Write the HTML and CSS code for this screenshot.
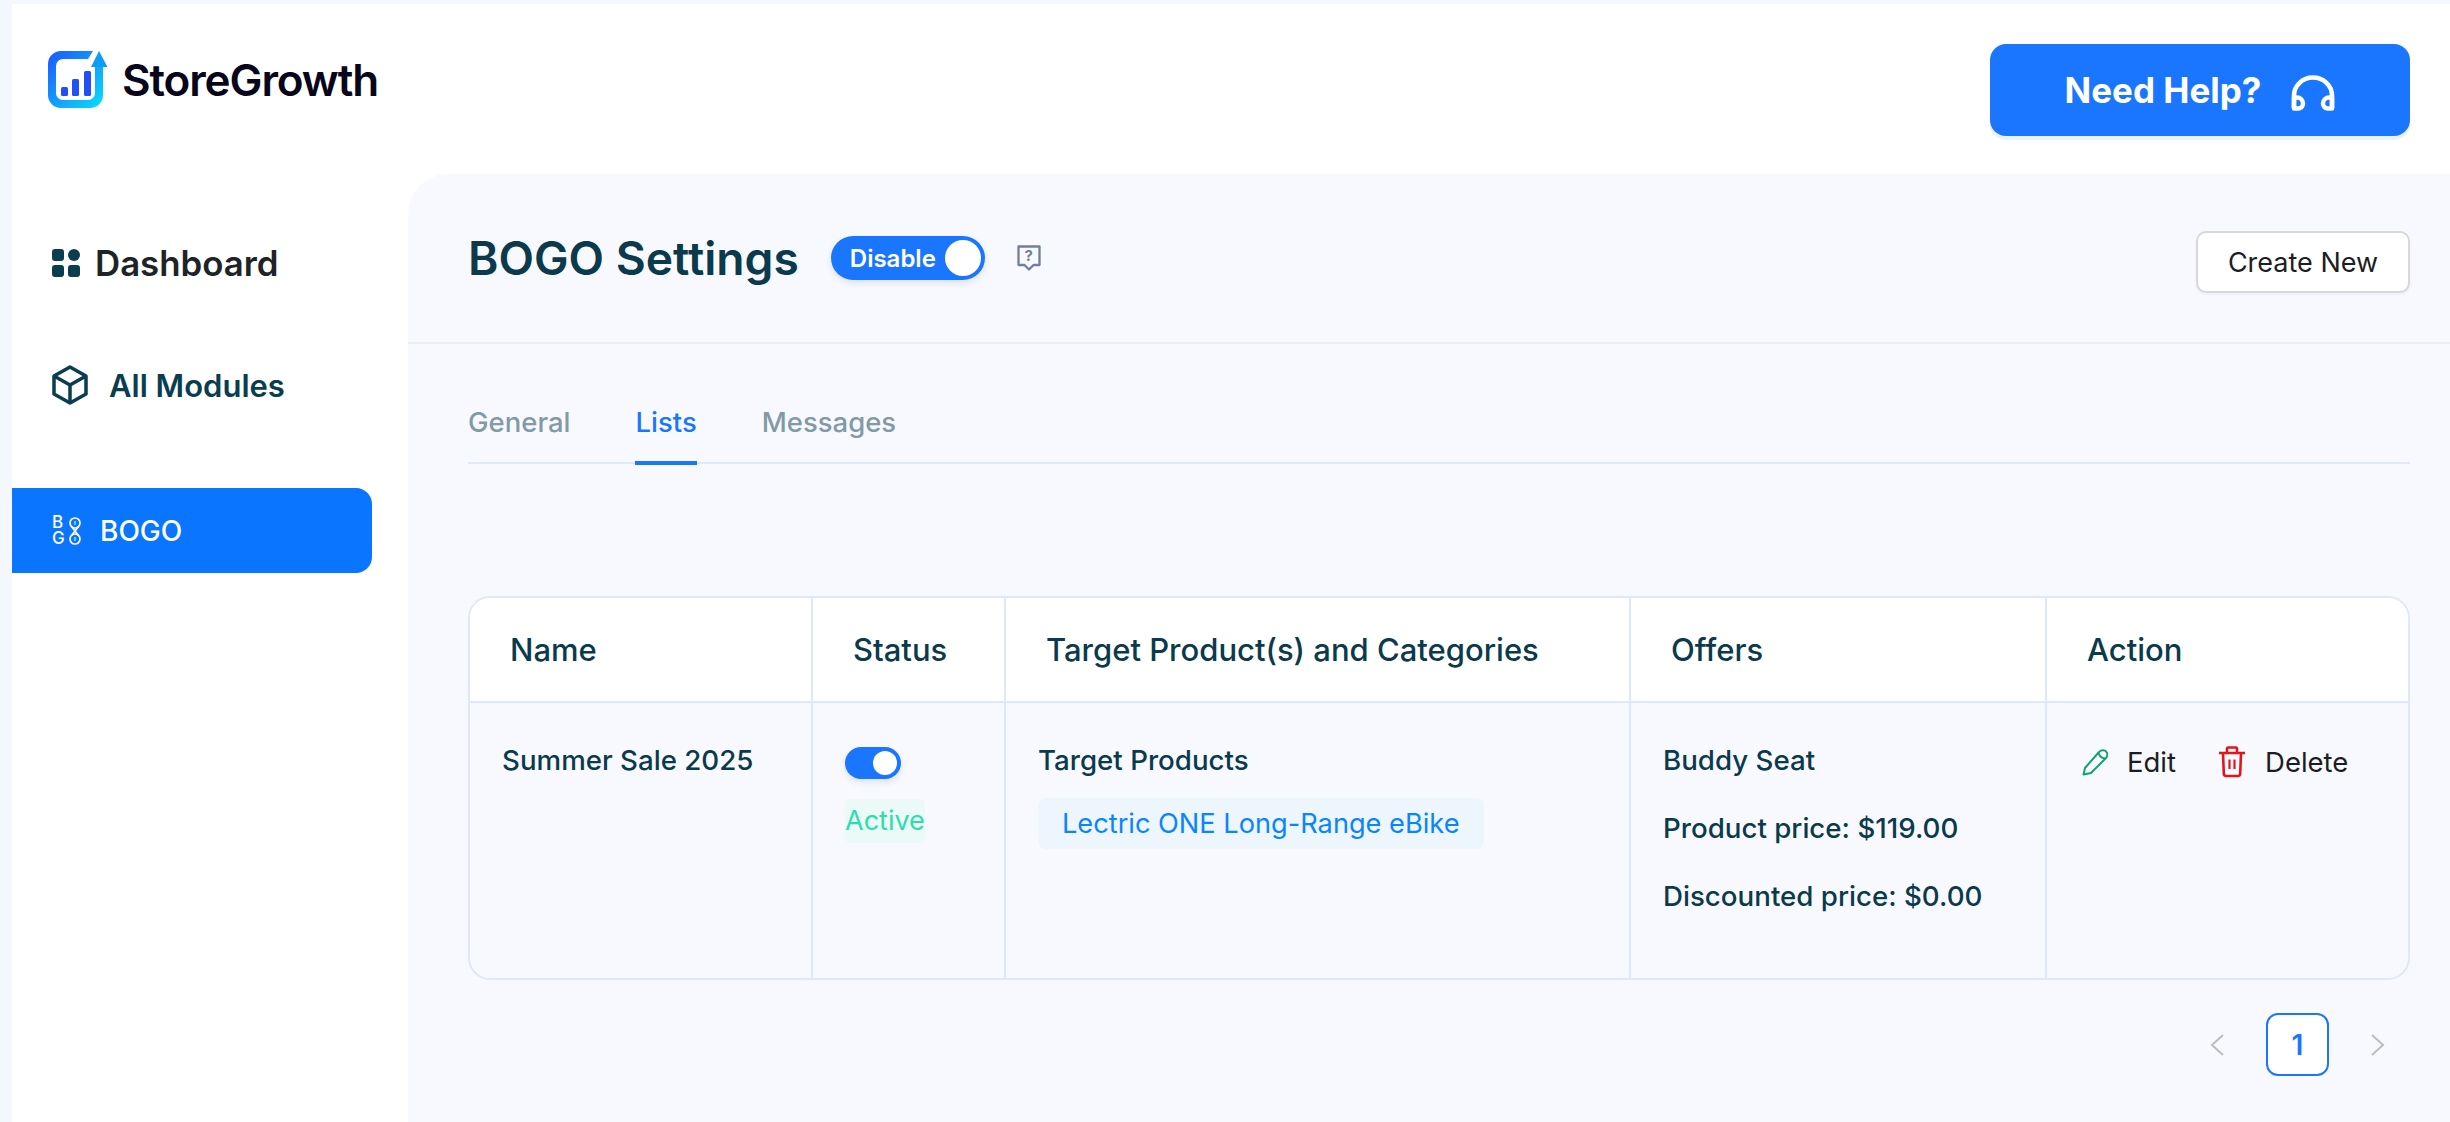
FILE: index.html
```html
<!DOCTYPE html>
<html lang="en">
<head>
    <meta charset="UTF-8">
    <meta name="viewport" content="width=device-width, initial-scale=1.0">
    <title>BOGO Settings</title>
    <link rel="stylesheet" href="styles.css">
</head>
<body>
    <div class="page">
        <header class="topbar">
            <div class="logo">
                <svg class="logo-icon" width="60" height="58" viewBox="0 0 60 58">
                    <defs>
                        <linearGradient id="logoGrad" gradientUnits="userSpaceOnUse" x1="0" y1="0" x2="58" y2="58">
                            <stop offset="0" stop-color="#1d55ff"/>
                            <stop offset="1" stop-color="#08e4fb"/>
                        </linearGradient>
                    </defs>
                    <path d="M45 0H13A13 13 0 0 0 0 13V44A13 13 0 0 0 13 57H42A13 13 0 0 0 55 44V16H47V42A7 7 0 0 1 40 49H15A7 7 0 0 1 8 42V15A7 7 0 0 1 15 8H40Z" fill="url(#logoGrad)"/>
                    <path d="M51 0L59.500 16H43Z" fill="#0f9bf8"/>
                    <rect x="13" y="36" width="7" height="9" rx="1.500" fill="#2150f5"/>
                    <rect x="24" y="28" width="7" height="17" rx="1.500" fill="#2150f5"/>
                    <rect x="36" y="20" width="7" height="25" rx="1.500" fill="#2150f5"/>
                </svg>
                <span class="logo-text">StoreGrowth</span>
            </div>
            <a class="help-btn">
                <span>Need Help?</span>
                <svg width="44" height="36" viewBox="0 0 44 36" fill="none" stroke="#fff" stroke-width="4.500" stroke-linejoin="round">
                    <path d="M3 33V20.500a19 18 0 0 1 38 0V33"/>
                    <path d="M3 22.500H6A6 6 0 0 1 12 28.500A5 5 0 0 1 7 33.500H3Z"/>
                    <path d="M41 22.500H38A6 6 0 0 0 32 28.500A5 5 0 0 0 37 33.500H41Z"/>
                </svg>
            </a>
        </header>
        <div class="layout">
            <aside class="sidebar">
                <a class="nav-item nav-dashboard">
                    <svg width="28" height="28" viewBox="0 0 28 28" fill="#0a3d50">
                        <rect x="0" y="0" width="12" height="12" rx="3"/>
                        <circle cx="22" cy="6" r="6"/>
                        <rect x="0" y="16" width="12" height="12" rx="3"/>
                        <rect x="16" y="16" width="12" height="12" rx="3"/>
                    </svg>
                    <span>Dashboard</span>
                </a>
                <a class="nav-item nav-modules">
                    <svg width="36" height="40" viewBox="0 0 36 40" fill="none" stroke="#0a3d50" stroke-width="3.500" stroke-linejoin="round">
                        <path d="M18 2L34 11V29L18 38L2 29V11Z"/>
                        <path d="M2 11L18 20L34 11M18 20V38"/>
                    </svg>
                    <span>All Modules</span>
                </a>
                <a class="nav-item nav-active">
                    <span class="bogo-icon">
                        <span class="bogo-letters"><span>B</span><span>G</span></span>
                        <svg width="12" height="28" viewBox="0 0 12 28" fill="none" stroke="#fff" stroke-width="1.700">
                            <circle cx="6" cy="6" r="5"/>
                            <circle cx="6" cy="22" r="5"/>
                            <path d="M2.500 9.500L9.500 18.500M9.500 9.500L2.500 18.500"/>
                            <path d="M6 4V8M6 20V24" stroke-width="1"/>
                        </svg>
                    </span>
                    <span>BOGO</span>
                </a>
            </aside>
            <main class="panel">
                <div class="panel-head">
                    <div class="title-row">
                        <h1>BOGO Settings</h1>
                        <div class="switch-big">
                            <span>Disable</span>
                            <i class="knob"></i>
                        </div>
                        <span class="help-icon">
                            <svg width="24" height="26" viewBox="0 0 24 26" fill="none" stroke="#6f7f98" stroke-width="2.300" stroke-linejoin="round">
                                <path d="M1.500 1.500H22.500V20H16.500L12 24.500L7.500 20H1.500Z"/>
                            </svg>
                            <span class="help-mark">?</span>
                        </span>
                    </div>
                    <a class="create-btn">Create New</a>
                </div>
                <nav class="tabs">
                    <a class="tab">General</a>
                    <a class="tab tab-active">Lists</a>
                    <a class="tab">Messages</a>
                </nav>
                <div class="table-wrap">
                    <table class="bogo-table">
                        <colgroup>
                            <col class="col-name">
                            <col class="col-status">
                            <col class="col-target">
                            <col class="col-offers">
                            <col>
                        </colgroup>
                        <thead>
                            <tr>
                                <th>Name</th>
                                <th>Status</th>
                                <th>Target Product(s) and Categories</th>
                                <th>Offers</th>
                                <th>Action</th>
                            </tr>
                        </thead>
                        <tbody>
                            <tr>
                                <td>Summer Sale 2025</td>
                                <td>
                                    <div class="switch-small"><i class="knob"></i></div>
                                    <span class="status-chip">Active</span>
                                </td>
                                <td>
                                    <div>Target Products</div>
                                    <span class="product-chip">Lectric ONE Long-Range eBike</span>
                                </td>
                                <td class="offers">
                                    <p>Buddy Seat</p>
                                    <p>Product price: $119.00</p>
                                    <p>Discounted price: $0.00</p>
                                </td>
                                <td>
                                    <div class="actions">
                                        <a class="action">
                                            <svg width="26" height="28" viewBox="0 0 26 28" fill="none" stroke="#10a36b" stroke-width="2" stroke-linejoin="round">
                                                <path d="M1.500 26.500L3 20L17 4C19 1.500 23 1.500 24.500 4C26 6 25.500 8 24 10L9 25Z"/>
                                                <path d="M16.500 5C17.500 8 20 10.500 23.500 10.500"/>
                                            </svg>
                                            <span>Edit</span>
                                        </a>
                                        <a class="action">
                                            <svg width="28" height="32" viewBox="0 0 28 32" fill="none" stroke="#e0161b" stroke-width="2.600" stroke-linejoin="round">
                                                <path d="M1 7H27"/>
                                                <path d="M9 7V3A1.500 1.500 0 0 1 10.500 1.500H17.500A1.500 1.500 0 0 1 19 3V7"/>
                                                <path d="M5 7L5.800 27.500A2.500 2.500 0 0 0 8.300 30H19.700A2.500 2.500 0 0 0 22.200 27.500L23 7"/>
                                                <path d="M11.500 13.500V23M16.500 13.500V23" stroke-width="2.200"/>
                                            </svg>
                                            <span>Delete</span>
                                        </a>
                                    </div>
                                </td>
                            </tr>
                        </tbody>
                    </table>
                </div>
                <div class="pagination">
                    <svg width="14" height="22" viewBox="0 0 14 22" fill="none" stroke="#b9bcc2" stroke-width="2"><path d="M13 1L2 11L13 21"/></svg>
                    <span class="page-num">1</span>
                    <svg width="14" height="22" viewBox="0 0 14 22" fill="none" stroke="#b9bcc2" stroke-width="2"><path d="M1 1L12 11L1 21"/></svg>
                </div>
            </main>
        </div>
    </div>
</body>
</html>
```

FILE: styles.css
```css
*{
    box-sizing: border-box;
}
html, body{
    margin: 0;
    height: 100%;
}
body{
    font-family: Inter, "Liberation Sans", sans-serif;
    background-color: #f5f7fe;
    padding: 4px 0 0 12px;
    overflow: hidden;
    color: #0a3a4c;
}
.page{
    background-color: #fff;
    height: 1118px;
    display: flex;
    flex-direction: column;
}
.topbar{
    height: 170px;
    display: flex;
    justify-content: space-between;
    align-items: flex-start;
    padding: 40px 40px 0 36px;
}
.logo{
    display: flex;
    align-items: center;
    gap: 14px;
    margin-top: 7px;
}
.logo-text{
    font-size: 44px;
    font-weight: 600;
    color: #07061a;
    letter-spacing: -1.100px;
}
.help-btn{
    width: 420px;
    height: 92px;
    background-color: #1a76ff;
    border-radius: 16px;
    box-shadow: 0 4px 0 #e9f3ff;
    display: flex;
    align-items: center;
    justify-content: center;
    gap: 30px;
    color: #fff;
    font-size: 35px;
    font-weight: 700;
}
.help-btn svg{
    margin-top: 5px;
}
.layout{
    flex: 1;
    display: flex;
    min-height: 0;
}
.sidebar{
    width: 396px;
    padding-top: 67px;
}
.nav-item{
    display: flex;
    align-items: center;
    height: 44px;
    padding-left: 40px;
}
.nav-dashboard{
    gap: 15px;
    margin-bottom: 78px;
    font-size: 34.800px;
    font-weight: 600;
    color: #1e2327;
}
.nav-modules{
    gap: 21px;
    margin-bottom: 81px;
    font-size: 31px;
    font-weight: 600;
    color: #0a3d50;
}
.nav-active{
    width: 360px;
    height: 85px;
    gap: 18px;
    background-color: #0a76ff;
    border-radius: 0 16px 16px 0;
    color: #fff;
    font-size: 28px;
    font-weight: 500;
}
.bogo-icon{
    display: flex;
    align-items: center;
    width: 30px;
}
.bogo-letters{
    display: flex;
    flex-direction: column;
    width: 17px;
    font-size: 17px;
    line-height: 15.500px;
    font-weight: 500;
}
.panel{
    flex: 1;
    background-color: #f8f9fe;
    border-top-left-radius: 40px;
}
.panel-head{
    height: 170px;
    border-bottom: 2px solid #ecedf1;
    padding: 57px 40px 0 60px;
    display: flex;
    justify-content: space-between;
    align-items: flex-start;
}
.title-row{
    display: flex;
    align-items: center;
    gap: 32px;
    height: 54px;
}
h1{
    margin: 0;
    font-size: 46.200px;
    font-weight: 600;
    color: #0a3a4c;
}
.switch-big{
    width: 154px;
    height: 44px;
    border-radius: 22px;
    background-color: #1a76ff;
    display: flex;
    align-items: center;
    justify-content: space-between;
    padding: 0 4px 0 19px;
    color: #fff;
    font-size: 24px;
    font-weight: 600;
    box-shadow: 0 3px 6px rgba(20, 60, 120, 0.12);
}
.knob{
    display: block;
    width: 36px;
    height: 36px;
    border-radius: 50%;
    background-color: #fff;
}
.help-icon{
    position: relative;
    display: block;
    width: 24px;
    height: 26px;
}
.help-mark{
    position: absolute;
    left: 0;
    right: 0;
    top: 3px;
    text-align: center;
    font-size: 15px;
    line-height: 15px;
    font-weight: 700;
    color: #6f7f98;
}
.create-btn{
    width: 214px;
    height: 62px;
    background-color: #fff;
    border: 2px solid #d8d8dc;
    border-radius: 10px;
    box-shadow: 0 2px 3px rgba(0, 0, 0, 0.04);
    display: flex;
    align-items: center;
    justify-content: center;
    font-size: 27px;
    color: #1d1d1f;
}
.tabs{
    display: flex;
    gap: 65px;
    margin: 60px 40px 0 60px;
    border-bottom: 2px solid #dfe9f8;
}
.tab{
    font-size: 27.500px;
    font-weight: 500;
    line-height: 36px;
    padding-bottom: 21px;
    border-bottom: 4px solid transparent;
    margin-bottom: -3px;
    color: #829aa6;
}
.tab-active{
    color: #1a76ff;
    border-bottom-color: #1a76ff;
}
.table-wrap{
    margin: 132px 40px 0 60px;
    height: 384px;
    border: 2px solid #dfe8fa;
    border-radius: 22px;
    overflow: hidden;
}
.bogo-table{
    width: 100%;
    height: 100%;
    table-layout: fixed;
    border-collapse: separate;
    border-spacing: 0;
}
.col-name{
    width: 343px;
}
.col-status{
    width: 193px;
}
.col-target{
    width: 625px;
}
.col-offers{
    width: 416px;
}
th{
    height: 105px;
    background-color: #fff;
    border-bottom: 2px solid #dfe8fa;
    border-right: 2px solid #dfe8fa;
    padding: 0 0 0 40px;
    text-align: left;
    font-size: 31px;
    font-weight: 500;
    color: #0a3a4c;
}
td{
    border-right: 2px solid #dfe8fa;
    padding: 41px 0 0 32px;
    vertical-align: top;
    font-size: 27.700px;
    font-weight: 500;
    line-height: 32px;
    color: #0a3a4c;
}
th:last-child, td:last-child{
    border-right: none;
}
.switch-small{
    width: 56px;
    height: 32px;
    margin-top: 3px;
    border-radius: 16px;
    background-color: #1a76ff;
    display: flex;
    align-items: center;
    justify-content: flex-end;
    padding-right: 4px;
    box-shadow: 0 3px 6px rgba(20, 60, 120, 0.12);
}
.switch-small .knob{
    width: 24px;
    height: 24px;
}
.status-chip{
    display: inline-block;
    margin-top: 20px;
    height: 44px;
    line-height: 44px;
    border-radius: 6px;
    background-color: #ebfaf6;
    color: #2edcb0;
    font-size: 27px;
    font-weight: 400;
}
.product-chip{
    display: inline-block;
    margin-top: 22px;
    height: 51px;
    line-height: 51px;
    padding: 0 24px;
    border-radius: 8px;
    background-color: #eef6fd;
    color: #0a84ff;
    font-size: 27.200px;
    font-weight: 400;
    white-space: nowrap;
}
.offers p{
    margin: 0 0 36px;
}
.actions{
    display: flex;
    gap: 42px;
    margin: 2px 0 0 3px;
    font-size: 27.500px;
}
.action{
    display: flex;
    align-items: center;
    gap: 19px;
    color: #1d1d1f;
    font-weight: 400;
}
.pagination{
    display: flex;
    align-items: center;
    justify-content: flex-end;
    gap: 42px;
    margin: 33px 65px 0 0;
}
.page-num{
    width: 63px;
    height: 63px;
    border: 2px solid #1a76ff;
    border-radius: 12px;
    background-color: #fff;
    display: flex;
    align-items: center;
    justify-content: center;
    font-size: 28px;
    font-weight: 600;
    color: #1a76ff;
}
```
